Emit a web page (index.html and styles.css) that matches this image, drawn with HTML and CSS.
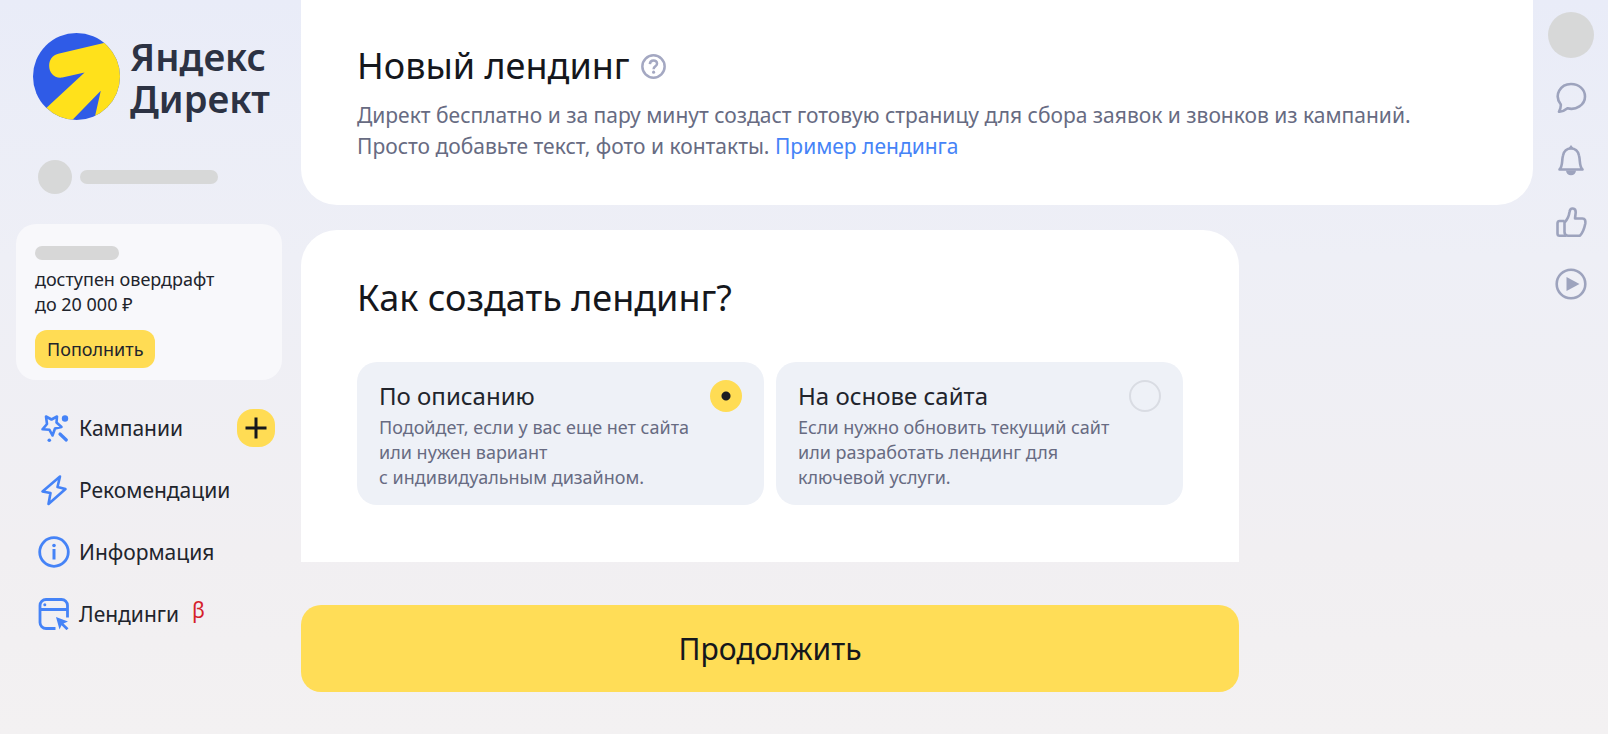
FILE: index.html
```html
<!DOCTYPE html>
<html lang="ru">
<head>
<meta charset="utf-8">
<title>Яндекс Директ — Новый лендинг</title>
<link rel="stylesheet" href="styles.css">
</head>
<body>
<div class="app">
  <aside class="sidebar">
    <a class="logo" href="#">
      <svg class="logo-mark" viewBox="0 0 86 86" aria-hidden="true">
        <defs><clipPath id="disc"><circle cx="43" cy="43" r="43"/></clipPath></defs>
        <g clip-path="url(#disc)">
          <rect width="86" height="86" fill="#2f5be7"/>
          <path d="M70 10 25 20.500C11 24 14 46 29 44L51 39 11 76 33 92 67 57 60 88H90V8Z" fill="#ffe11b"/>
        </g>
      </svg>
      <span class="logo-text">Яндекс<br>Директ</span>
    </a>
    <div class="account">
      <span class="account-avatar"></span>
      <span class="account-name"></span>
    </div>
    <section class="balance">
      <span class="balance-sum"></span>
      <p class="balance-text">доступен овердрафт<br>до 20 000 ₽</p>
      <button class="balance-button" type="button">Пополнить</button>
    </section>
    <nav class="nav">
      <div class="nav-row">
        <a class="nav-link" href="#">
          <svg class="nav-icon" viewBox="0 0 32 32" fill="none" stroke="#4583f7" stroke-width="2.600" stroke-linejoin="round" stroke-linecap="round" aria-hidden="true">
            <path d="M8 4.500 13.500 7.500 19 4.500 18.500 10.500 23.500 15 17 16.500 14.500 23.500 11.500 17.800 4.500 17.300 9 12Z"/>
            <path d="m22 22 6.300 6" stroke-width="3.200"/>
            <circle cx="27" cy="6.500" r="3.200" fill="#4583f7" stroke="none"/>
            <circle cx="11.300" cy="28.300" r="1.800" fill="#4583f7" stroke="none"/>
          </svg>
          <span>Кампании</span>
        </a>
        <button class="nav-add" type="button" aria-label="Создать кампанию">
          <svg viewBox="0 0 38 38" stroke="#15171c" stroke-width="3" aria-hidden="true"><path d="M19 8.500v21M8.500 19h21"/></svg>
        </button>
      </div>
      <div class="nav-row">
        <a class="nav-link" href="#">
          <svg class="nav-icon" viewBox="0 0 32 32" fill="none" stroke="#4583f7" stroke-width="2.600" stroke-linejoin="round" aria-hidden="true">
            <path d="M22 2.500 4.500 17.500 12.500 19 10.500 30 27.500 15 19.500 13Z"/>
          </svg>
          <span>Рекомендации</span>
        </a>
      </div>
      <div class="nav-row">
        <a class="nav-link" href="#">
          <svg class="nav-icon" viewBox="0 0 32 32" fill="none" stroke="#4583f7" stroke-width="2.800" aria-hidden="true">
            <circle cx="16" cy="16" r="14.300"/>
            <path d="M16 13v10.500" stroke-width="3"/>
            <circle cx="16" cy="9.500" r="1.800" fill="#4583f7" stroke="none"/>
          </svg>
          <span>Информация</span>
        </a>
      </div>
      <div class="nav-row">
        <a class="nav-link" href="#">
          <svg class="nav-icon" viewBox="0 0 32 32" fill="none" stroke="#4583f7" stroke-width="2.800" aria-hidden="true">
            <path d="M17.500 30.500H8A6 6 0 0 1 2 24.500V7.500A6 6 0 0 1 8 1.500H23.500A6 6 0 0 1 29.500 7.500V19.500M2 11.500H29.500"/>
            <circle cx="6.800" cy="6.800" r="1.500" fill="#4583f7" stroke="none"/>
            <path d="m18 19 12 4.500-4.500 2 5 4.700-2 2-5-5-2 4.300Z" fill="#4583f7" stroke="none"/>
          </svg>
          <span>Лендинги</span>
          <span class="nav-beta">β</span>
        </a>
      </div>
    </nav>
  </aside>

  <main class="main">
    <header class="intro">
      <div class="intro-heading">
        <h1 class="title">Новый лендинг</h1>
        <button class="help" type="button" aria-label="Справка">
          <svg viewBox="0 0 24 24" fill="none" stroke="#a4a8c2" stroke-width="2.400" aria-hidden="true">
            <circle cx="12" cy="12" r="10.700"/>
            <path d="M8.500 9.700C8.700 4.800 15.600 5.200 15.400 9.400 15.300 11.900 12.100 11.700 12.100 14.600"/>
            <circle cx="12.100" cy="17.400" r="1.500" fill="#a4a8c2" stroke="none"/>
          </svg>
        </button>
      </div>
      <p class="lead">Директ бесплатно и за пару минут создаст готовую страницу для сбора заявок и звонков из кампаний.<br>Просто добавьте текст, фото и контакты. <a class="lead-link" href="#">Пример лендинга</a></p>
    </header>

    <form class="create">
      <section class="panel">
        <h2 class="title" id="method">Как создать лендинг?</h2>
        <div class="options" role="radiogroup" aria-labelledby="method">
          <label class="option">
            <span class="option-body">
              <span class="option-title">По описанию</span>
              <span class="option-text">Подойдет, если у вас еще нет сайта<br>или нужен вариант<br>с индивидуальным дизайном.</span>
            </span>
            <input class="option-radio" type="radio" name="method" checked>
          </label>
          <label class="option">
            <span class="option-body">
              <span class="option-title">На основе сайта</span>
              <span class="option-text">Если нужно обновить текущий сайт<br>или разработать лендинг для<br>ключевой услуги.</span>
            </span>
            <input class="option-radio" type="radio" name="method">
          </label>
        </div>
      </section>
      <button class="submit" type="button">Продолжить</button>
    </form>
  </main>

  <aside class="rail">
    <span class="rail-avatar"></span>
    <button class="rail-button" type="button" aria-label="Чат">
      <svg viewBox="0 0 32 32" fill="none" stroke="#9da3bd" stroke-width="2.600" stroke-linejoin="round" aria-hidden="true">
        <path d="M5.800 22.500C-1.500 13 5.500 2 16 2 24 2 30 7.500 30 14.500 30 23 21 28.500 12.500 26.300 9.500 28.800 7 29.800 4 29.600 5.500 27 6 25 5.800 22.500Z"/>
      </svg>
    </button>
    <button class="rail-button" type="button" aria-label="Уведомления">
      <svg viewBox="0 0 32 32" fill="none" stroke="#9da3bd" stroke-width="2.600" stroke-linejoin="round" aria-hidden="true">
        <path d="M4.500 25.500C8 22 6.500 17 8 11.500 9 7 12 4.500 16 4.500 20 4.500 23 7 24 11.500 25.500 17 24 22 27.500 25.500Z"/>
        <path d="M13.200 4.500 16 1 18.800 4.500ZM11 26.500a5 4.800 0 0 0 10 0Z" fill="#9da3bd" stroke="none"/>
      </svg>
    </button>
    <button class="rail-button" type="button" aria-label="Оценить">
      <svg viewBox="0 0 32 32" fill="none" stroke="#9da3bd" stroke-width="2.600" stroke-linejoin="round" aria-hidden="true">
        <path d="M9.500 16.500C13 13 14 10 14.500 6 15 1 21 1.500 20.700 6.500L20 12.500H27.500C30 12.500 30.700 14.500 30.300 17.500 29.300 22.500 28.500 26 25 29.700H13C10.500 29.700 9.500 28.500 9.500 26Z"/>
        <path d="M9.500 15H4.500Q2.500 15 2.500 17.500V27.500Q2.500 29.700 4.500 29.700H11"/>
      </svg>
    </button>
    <button class="rail-button" type="button" aria-label="Видео">
      <svg viewBox="0 0 32 32" fill="none" stroke="#9da3bd" stroke-width="2.600" aria-hidden="true">
        <circle cx="16" cy="16" r="14.300"/>
        <path d="M11.500 9 24.500 16 11.500 23Z" fill="#9da3bd" stroke="none"/>
      </svg>
    </button>
  </aside>
</div>
</body>
</html>
```
FILE: styles.css
```css
* {
  box-sizing: border-box;
}

body {
  margin: 0;
  min-height: 100vh;
  background: linear-gradient(180deg, #e9ecf8 0%, #eeeff6 35%, #f1eff2 75%, #f3f1f2 100%);
  color: #21242c;
  font-family: "Noto Sans", "Open Sans", sans-serif;
}

button {
  border: 0;
  padding: 0;
  background: none;
  color: inherit;
  font: inherit;
  cursor: pointer;
}

h1, h2, p {
  margin: 0;
}

a {
  color: inherit;
  text-decoration: none;
}

svg {
  display: block;
}

.app {
  display: grid;
  grid-template-columns: 301px 1fr 75px;
  min-height: 100vh;
}

/* Sidebar */

.sidebar {
  padding: 33px 19px 0 16px;
}

.logo {
  display: flex;
  align-items: center;
  gap: 10px;
  padding-left: 17px;
}

.logo-mark {
  flex: none;
  width: 87px;
  height: 87px;
}

.logo-text {
  color: #2c3243;
  font-size: 38px;
  font-weight: 600;
  line-height: 42px;
}

.account {
  display: flex;
  align-items: center;
  gap: 8px;
  margin-top: 40px;
  padding-left: 22px;
}

.account-avatar {
  width: 34px;
  height: 34px;
  border-radius: 50%;
  background: #d7d8d8;
}

.account-name {
  width: 138px;
  height: 14px;
  border-radius: 7px;
  background: #d7d8d8;
}

.balance {
  margin-top: 30px;
  padding: 22px 19px 12px;
  border-radius: 20px;
  background: #f8f8fb;
}

.balance-sum {
  display: block;
  width: 84px;
  height: 14px;
  border-radius: 7px;
  background: #d7d7d7;
}

.balance-text {
  margin-top: 7px;
  font-size: 18px;
  line-height: 25px;
}

.balance-button {
  height: 38px;
  margin-top: 13px;
  padding: 0 12px;
  border-radius: 12px;
  background: #ffdc54;
  font-size: 18px;
}

.nav {
  display: grid;
  gap: 24px;
  margin-top: 29px;
  padding: 0 7px 0 22px;
}

.nav-row {
  display: flex;
  align-items: center;
  justify-content: space-between;
  height: 38px;
}

.nav-link {
  display: flex;
  align-items: center;
  font-size: 21px;
  line-height: 28px;
}

.nav-icon {
  width: 32px;
  height: 32px;
  margin-right: 9px;
}

.nav-beta {
  margin-left: 13px;
  padding-bottom: 8px;
  color: #d5202a;
}

.nav-add {
  width: 38px;
  height: 38px;
  border-radius: 16px;
  background: #ffdc54;
}

/* Main column */

.intro {
  padding: 44px 56px 43px;
  border-radius: 0 0 36px 36px;
  background: #fff;
}

.intro-heading {
  display: flex;
  align-items: center;
  gap: 11px;
}

.title {
  color: #15171c;
  font-size: 36px;
  font-weight: 400;
  line-height: 44px;
}

.help {
  width: 25px;
  height: 25px;
}

.lead {
  margin-top: 12px;
  color: #676b82;
  font-size: 21px;
  line-height: 31px;
}

.lead-link {
  color: #4583f7;
}

.create {
  margin: 25px 294px 42px 0;
}

.panel {
  padding: 46px 56px 57px;
  border-radius: 36px 36px 0 0;
  background: #fff;
}

.options {
  display: grid;
  grid-template-columns: 1fr 1fr;
  gap: 12px;
  margin-top: 42px;
}

.option {
  display: flex;
  align-items: flex-start;
  justify-content: space-between;
  padding: 18px 22px 15px;
  border-radius: 20px;
  background: #eef1f7;
  cursor: pointer;
}

.option-title {
  display: block;
  font-size: 24px;
  line-height: 32px;
}

.option-text {
  display: block;
  padding-top: 3px;
  color: #676b82;
  font-size: 18px;
  line-height: 25px;
}

.option-radio {
  appearance: none;
  flex: none;
  width: 32px;
  height: 32px;
  margin: 0;
  border: 2px solid #d9dce3;
  border-radius: 50%;
}

.option-radio:checked {
  border: 0;
  background: radial-gradient(circle, #1b1d22 0 4px, #ffdc54 5px);
}

.submit {
  display: block;
  width: 100%;
  height: 87px;
  margin-top: 43px;
  border-radius: 20px;
  background: #ffdd57;
  color: #15171c;
  font-size: 30px;
}

/* Right rail */

.rail {
  display: flex;
  flex-direction: column;
  align-items: center;
  padding-top: 12px;
}

.rail-avatar {
  width: 46px;
  height: 46px;
  margin-bottom: 24px;
  border-radius: 50%;
  background: #d7d8d8;
}

.rail-button {
  width: 32px;
  height: 32px;
  margin-bottom: 30px;
}
```
